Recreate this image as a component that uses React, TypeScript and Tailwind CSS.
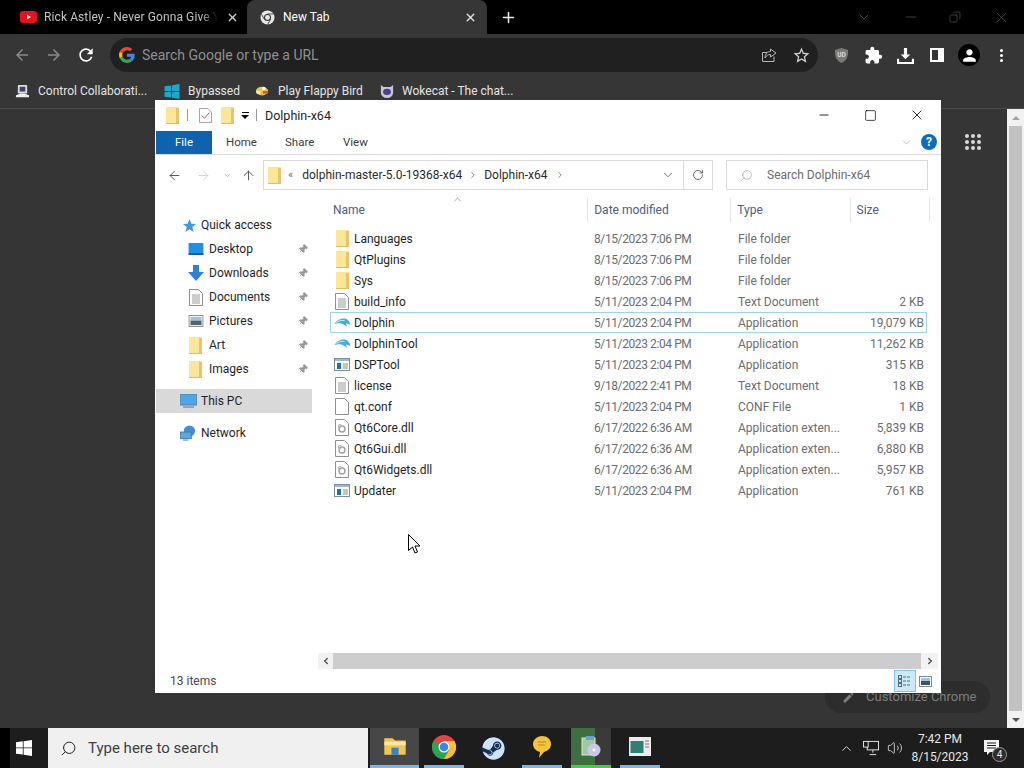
import { MdArrowBack, MdArrowForward, MdRefresh, MdExtension, MdPerson, MdEdit, MdOutlineStarBorder } from "react-icons/md";
import { FaSteam } from "react-icons/fa";
import { X, Plus, ChevronDown, Minus, Square, Copy, Search, ArrowLeft, ArrowRight, ArrowUp, RotateCw, Pin, ChevronRight, ChevronLeft, ChevronUp, Volume2 } from "lucide-react";

const FONT = "font-['Roboto',sans-serif]";

function Folder({ className = "" }: { className?: string }) {
  return (
    <svg viewBox="0 0 13 17" className={`w-[13px] h-[17px] ${className}`}>
      <rect x="0" y="0" width="13" height="17" fill="#fde59a" />
      <rect x="10" y="1" width="3" height="16" fill="#e8c568" />
      <rect x="0" y="16" width="13" height="1" fill="#e3bd5a" />
    </svg>
  );
}

function TextFile() {
  return (
    <svg viewBox="0 0 14 17" className="w-[14px] h-[17px]">
      <path d="M.5.5h9l4 4v12H.5z" fill="#fff" stroke="#8f8f8f" />
      <path d="M3 6h8M3 8h8M3 10h8M3 12h8M3 14h8" stroke="#9a9a9a" />
    </svg>
  );
}

function PlainFile() {
  return (
    <svg viewBox="0 0 14 17" className="w-[14px] h-[17px]">
      <path d="M.5.5h9l4 4v12H.5z" fill="#fff" stroke="#8f8f8f" />
    </svg>
  );
}

function DllFile() {
  return (
    <svg viewBox="0 0 14 17" className="w-[14px] h-[17px]">
      <path d="M.5.5h9l4 4v12H.5z" fill="#fff" stroke="#8f8f8f" />
      <circle cx="7" cy="10" r="3" fill="none" stroke="#a0a0a0" strokeWidth="1.4" />
      <circle cx="5" cy="7" r="1.6" fill="none" stroke="#b5b5b5" />
    </svg>
  );
}

function AppFile() {
  return (
    <svg viewBox="0 0 16 13" className="w-[16px] h-[13px]">
      <rect x=".5" y=".5" width="15" height="12" fill="#fff" stroke="#7b8fa3" />
      <rect x="1" y="1" width="14" height="2" fill="#9db8d2" />
      <rect x="3" y="5" width="4" height="6" fill="#1c6fc0" />
      <path d="M9 6h5M9 8h5M9 10h5" stroke="#8a8a8a" />
    </svg>
  );
}

function DolphinIcon() {
  return (
    <svg viewBox="0 0 17 12" className="w-[17px] h-[12px]">
      <path d="M.5 7C3 2.500 8 1 11 1.500c3 .5 4.500 3 5.500 6.500-1.500-1-3-1.500-4.500-1.500l1 3C11 8.500 9 7 7 6.500 5 6 3 6 .5 7z" fill="#45aedb" />
      <path d="M2.500 5.500c2-1.500 5-2.500 8-2" stroke="#d8f0fa" fill="none" />
    </svg>
  );
}

type Row = { name: string; date: string; type: string; size: string; icon: React.ReactNode; selected?: boolean };

const rows: Row[] = [
  { name: "Languages", date: "8/15/2023 7:06 PM", type: "File folder", size: "", icon: <Folder /> },
  { name: "QtPlugins", date: "8/15/2023 7:06 PM", type: "File folder", size: "", icon: <Folder /> },
  { name: "Sys", date: "8/15/2023 7:06 PM", type: "File folder", size: "", icon: <Folder /> },
  { name: "build_info", date: "5/11/2023 2:04 PM", type: "Text Document", size: "2 KB", icon: <TextFile /> },
  { name: "Dolphin", date: "5/11/2023 2:04 PM", type: "Application", size: "19,079 KB", icon: <DolphinIcon />, selected: true },
  { name: "DolphinTool", date: "5/11/2023 2:04 PM", type: "Application", size: "11,262 KB", icon: <DolphinIcon /> },
  { name: "DSPTool", date: "5/11/2023 2:04 PM", type: "Application", size: "315 KB", icon: <AppFile /> },
  { name: "license", date: "9/18/2022 2:41 PM", type: "Text Document", size: "18 KB", icon: <TextFile /> },
  { name: "qt.conf", date: "5/11/2023 2:04 PM", type: "CONF File", size: "1 KB", icon: <PlainFile /> },
  { name: "Qt6Core.dll", date: "6/17/2022 6:36 AM", type: "Application exten...", size: "5,839 KB", icon: <DllFile /> },
  { name: "Qt6Gui.dll", date: "6/17/2022 6:36 AM", type: "Application exten...", size: "6,880 KB", icon: <DllFile /> },
  { name: "Qt6Widgets.dll", date: "6/17/2022 6:36 AM", type: "Application exten...", size: "5,957 KB", icon: <DllFile /> },
  { name: "Updater", date: "5/11/2023 2:04 PM", type: "Application", size: "761 KB", icon: <AppFile /> },
];

function ChromeBar() {
  return (
    <div className="shrink-0">
      {/* Tab strip */}
      <div className="h-[34px] bg-black flex items-stretch text-[12px]">
        <div className="w-[247px] flex items-center pl-[20px] text-[#c4c4c4]">
          <svg viewBox="0 0 17 12" className="w-[17px] h-[12px] shrink-0">
            <rect width="17" height="12" rx="3" fill="#e8121c" />
            <path d="M7 3.500l4 2.500-4 2.500z" fill="#fff" />
          </svg>
          <span className="ml-[7px] w-[174px] whitespace-nowrap tracking-[0.1px] [mask-image:linear-gradient(to_right,black_90%,transparent)]">Rick Astley - Never Gonna Give Y</span>
          <X size={13} strokeWidth={2.5} className="ml-[8px] text-[#c8c8c8]" />
        </div>
        <div className="w-[240px] h-[34px] bg-[#363636] rounded-t-lg flex items-center pl-[13px] text-white">
          <svg viewBox="0 0 16 16" className="w-[15px] h-[15px] shrink-0">
            <circle cx="8" cy="8" r="7.500" fill="#e8e8e8" />
            <circle cx="8" cy="8" r="3.800" fill="#363636" />
            <circle cx="8" cy="8" r="2.600" fill="#e8e8e8" />
            <path d="M8 4.200h6.500M4.700 10 1.500 4.500M11.300 10 8 15.500" stroke="#363636" strokeWidth=".9" />
          </svg>
          <span className="ml-[8px] flex-1">New Tab</span>
          <X size={13} strokeWidth={2.5} className="mr-[10px] text-[#e0e0e0]" />
        </div>
        <Plus size={17} strokeWidth={2.2} className="ml-[13px] self-center text-[#e8e8e8]" />
        <div className="flex-1" />
        <div className="flex items-center text-[#5b5b5b]">
          <ChevronDown size={16} strokeWidth={1.2} className="mr-[31px]" />
          <Minus size={16} strokeWidth={1} className="mr-[30px]" />
          <Copy size={12} strokeWidth={1.2} className="mr-[32px] -scale-x-100" />
          <X size={17} strokeWidth={1} className="mr-[14px]" />
        </div>
      </div>

      {/* Toolbar */}
      <div className="h-[40px] pt-[2px] bg-[#363636] flex items-center">
        <MdArrowBack size={18} className="ml-[13px] text-[#8a8a8a]" />
        <MdArrowForward size={18} className="ml-[14px] text-[#8a8a8a]" />
        <MdRefresh size={20} className="ml-[13px] text-white" />
        <div className="ml-[14px] w-[708px] h-[34px] rounded-full bg-[#202020] flex items-center pl-[9px]">
          <svg viewBox="0 0 48 48" className="w-[16px] h-[16px]">
            <path fill="#EA4335" d="M24 9.500c3.500 0 6.700 1.200 9.200 3.600l6.900-6.900C35.900 2.400 30.500 0 24 0 14.600 0 6.500 5.400 2.600 13.200l8 6.200C12.500 13.700 17.800 9.500 24 9.500z" />
            <path fill="#4285F4" d="M47 24.500c0-1.600-.1-3.100-.4-4.500H24v9h12.900c-.6 3-2.200 5.500-4.800 7.200l7.700 6C44.300 38 47 31.800 47 24.500z" />
            <path fill="#FBBC05" d="M10.600 28.600c-.5-1.400-.8-3-.8-4.600s.3-3.200.8-4.600l-8-6.200C.9 16.500 0 20.100 0 24s.9 7.500 2.600 10.800z" />
            <path fill="#34A853" d="M24 48c6.500 0 11.900-2.100 15.800-5.800l-7.700-6c-2.100 1.400-4.900 2.300-8.100 2.300-6.200 0-11.500-4.200-13.400-9.900l-8 6.200C6.500 42.600 14.600 48 24 48z" />
          </svg>
          <span className="ml-[7px] text-[14px] text-[#8f8f8f]">Search Google or type a URL</span>
          <div className="flex-1" />
          <svg viewBox="0 0 16 16" className="w-[16px] h-[16px] text-[#b5b5b5] mr-[15px]" fill="none" stroke="currentColor">
            <path d="M13 9.500v5H1.500V5.500H6M9.500 2v2.500C6 4.500 4 7 4 11c1.500-2.500 3-3.500 5.500-3.500V10L15 6z" />
          </svg>
          <MdOutlineStarBorder size={19} className="text-[#d0d0d0] mr-[7px]" />
        </div>
        <svg viewBox="0 0 16 18" className="ml-[16px] w-[15px] h-[17px]">
          <path d="M8 1l7 2c0 7-1 11-7 14C2 14 1 10 1 3z" fill="#7b7b7b" />
          <text x="8" y="11" textAnchor="middle" fontSize="7" fill="#dcdcdc" fontWeight="700">UD</text>
        </svg>
        <MdExtension size={19} className="ml-[15px] text-white" />
        <svg viewBox="0 0 16 16" className="ml-[14px] w-[17px] h-[17px]" fill="#fff">
          <path d="M6.500 1h3v6h3L8 11.500 3.500 7h3zM0 11h2v3h12v-3h2v5H0z" />
        </svg>
        <div className="ml-[16px] w-[14px] h-[14px] border-[2px] border-white border-r-[6px] bg-[#363636]" />
        <div className="ml-[14px] w-[22px] h-[22px] rounded-full bg-black flex items-center justify-center">
          <MdPerson size={19} className="text-white" />
        </div>
        <div className="ml-[20px] flex flex-col gap-[2px]">
          <div className="w-[3px] h-[3px] rounded-full bg-white" />
          <div className="w-[3px] h-[3px] rounded-full bg-white" />
          <div className="w-[3px] h-[3px] rounded-full bg-white" />
        </div>
      </div>

      {/* Bookmarks */}
      <div className="h-[35px] bg-[#363636] border-b border-[#4a4a4a] flex items-center text-[12px] text-[#e4e4e4]">
        <svg viewBox="0 0 16 16" className="ml-[15px] w-[15px] h-[15px]">
          <rect x="3" y="1" width="10" height="9" rx="1" fill="#d8d8e8" />
          <rect x="5" y="3" width="6" height="5" fill="#40406a" />
          <path d="M1 12l5-2h4l5 2v2H1z" fill="#eee" />
        </svg>
        <span className="ml-[8px] w-[110px] whitespace-nowrap">Control Collaborati...</span>
        <svg viewBox="0 0 16 16" className="ml-[16px] w-[16px] h-[15px]" fill="#19a9c9">
          <path d="M0 2.500 7 1.500v6H0zM8 1.400l8-1.400v7.500H8zM0 8.500h7v6l-7-1zM8 8.500h8V16l-8-1.400z" />
        </svg>
        <span className="ml-[8px] w-[50px] whitespace-nowrap">Bypassed</span>
        <svg viewBox="0 0 16 12" className="ml-[17px] w-[14px] h-[12px]">
          <ellipse cx="8" cy="6" rx="7" ry="5" fill="#e8c25a" />
          <rect x="9" y="6" width="6" height="3" fill="#d8542c" />
          <circle cx="10" cy="3" r="2" fill="#fff" />
          <path d="M1 6h5v3H2z" fill="#f4e9c8" />
        </svg>
        <span className="ml-[9px] w-[84px] whitespace-nowrap">Play Flappy Bird</span>
        <svg viewBox="0 0 16 16" className="ml-[18px] w-[14px] h-[14px]">
          <path d="M1 1l3 2.500h8L15 1v9a7 6 0 0 1-14 0z" fill="#c7c3de" />
          <ellipse cx="8" cy="9" rx="4.500" ry="3.500" fill="#4b3f8a" />
        </svg>
        <span className="ml-[8px] whitespace-nowrap">Wokecat - The chat...</span>
      </div>
    </div>
  );
}

function QuickItem({ icon, label }: { icon: React.ReactNode; label: string }) {
  return (
    <div className="h-[24px] flex items-center">
      <div className="w-[54px] flex justify-end pr-[5px]">
        <div className="w-[17px] flex justify-center">{icon}</div>
      </div>
      <span className="w-[89px]">{label}</span>
      <Pin size={10} className="text-[#9a9a9a] fill-[#9a9a9a] rotate-45" />
    </div>
  );
}

function NavPane() {
  return (
    <div className="w-[157px] shrink-0 pt-[18px] text-[12px] text-[#1f1f1f]">
      <div className="h-[24px] flex items-center pl-[27px]">
        <svg viewBox="0 0 16 16" className="w-[15px] h-[15px]">
          <path d="M8 1l2 5 5 .4-4 3.300 1.300 5.300L8 12l-4.300 3L5 9.700 1 6.400 6 6z" fill="#3d9ae0" />
        </svg>
        <span className="ml-[4px]">Quick access</span>
      </div>
      <QuickItem
        label="Desktop"
        icon={
          <svg viewBox="0 0 16 13" className="w-[16px] h-[12px]">
            <rect width="16" height="13" fill="#1e90e8" />
            <rect y="11" width="16" height="2" fill="#0e5fa8" />
          </svg>
        }
      />
      <QuickItem
        label="Downloads"
        icon={
          <svg viewBox="0 0 16 16" className="w-[16px] h-[16px]">
            <path d="M5 0h6v7h5l-8 9-8-9h5z" fill="#2f80d8" />
          </svg>
        }
      />
      <QuickItem label="Documents" icon={<TextFile />} />
      <QuickItem
        label="Pictures"
        icon={
          <svg viewBox="0 0 16 13" className="w-[16px] h-[12px]">
            <rect x=".5" y=".5" width="15" height="12" fill="#fff" stroke="#8a8a8a" />
            <rect x="2" y="2" width="12" height="4" fill="#9fc4e2" />
            <rect x="2" y="6" width="12" height="5" fill="#4f6470" />
          </svg>
        }
      />
      <QuickItem label="Art" icon={<Folder />} />
      <QuickItem label="Images" icon={<Folder />} />
      <div className="mt-[8px] h-[24px] bg-[#d9d9d9] flex items-center pl-[24px] ml-px">
        <svg viewBox="0 0 17 15" className="w-[17px] h-[15px]">
          <rect x="0" y="0" width="17" height="11" fill="#4aa8e8" stroke="#5a7f98" />
          <rect x="3" y="12" width="11" height="2" fill="#8fa6b8" />
        </svg>
        <span className="ml-[4px]">This PC</span>
      </div>
      <div className="mt-[8px] h-[24px] flex items-center pl-[25px]">
        <svg viewBox="0 0 17 16" className="w-[16px] h-[16px]">
          <circle cx="10" cy="6" r="6" fill="#3f8fd8" />
          <rect x="0" y="7" width="12" height="7" fill="#5ba8e0" stroke="#4a7a9a" />
          <rect x="3" y="15" width="6" height="1" fill="#4a7a9a" />
        </svg>
        <span className="ml-[5px]">Network</span>
      </div>
    </div>
  );
}

function FileList() {
  return (
    <div className="flex-1 min-w-0 text-[12px]">
      {/* Column headers */}
      <div className="h-[31px] relative flex items-center pl-[7px] pb-[2px] text-[#4c607a]">
        <ChevronUp size={11} strokeWidth={1.5} className="absolute left-[123px] -top-px text-[#7a7a7a]" />
        <span className="w-[262px] border-r border-[#e5e5e5] h-[24px] leading-[24px] pl-[5px] -ml-[8px]">Name</span>
        <span className="w-[144px] border-r border-[#e5e5e5] h-[24px] leading-[24px] pl-[6px]">Date modified</span>
        <span className="w-[120px] border-r border-[#e5e5e5] h-[24px] leading-[24px] pl-[6px]">Type</span>
        <span className="w-[80px] border-r border-[#e5e5e5] h-[24px] leading-[24px] pl-[6px]">Size</span>
      </div>
      {/* Rows */}
      <div className="pt-[2px] pl-[1px] w-[611px]">
        {rows.map((r) => (
          <div
            key={r.name}
            className={`h-[21px] w-[597px] flex items-center ${r.selected ? "shadow-[inset_0_0_0_1px_#9fd3e8]" : ""}`}
          >
            <div className="w-[24px] flex items-center justify-center">{r.icon}</div>
            <span className="w-[240px] text-[#1f1f1f] whitespace-nowrap">{r.name}</span>
            <span className="w-[144px] text-[#6d6d6d] whitespace-nowrap tracking-[-0.4px]">{r.date}</span>
            <span className="w-[110px] text-[#6d6d6d] whitespace-nowrap">{r.type}</span>
            <span className="w-[76px] text-right text-[#6d6d6d] whitespace-nowrap">{r.size}</span>
          </div>
        ))}
      </div>
    </div>
  );
}

function ExplorerWindow() {
  return (
    <div className={`absolute left-[155px] top-[100px] w-[786px] h-[593px] bg-white flex flex-col ${FONT}`}>
      {/* Title bar */}
      <div className="h-[30px] shrink-0 flex items-center pl-[11px] text-[12.5px] text-[#1f1f1f]">
        <Folder />
        <div className="ml-[8px] w-px h-[12px] bg-[#9a9a9a]" />
        <svg viewBox="0 0 14 16" className="ml-[11px] w-[13px] h-[15px]">
          <path d="M.5.5h9l4 4v11H.5z" fill="#fff" stroke="#9a9a9a" />
          <path d="M3 8l3 3 5-6" stroke="#d0453a" fill="none" />
        </svg>
        <Folder className="ml-[9px]" />
        <div className="ml-[7px] flex flex-col items-center gap-[2px]">
          <div className="w-[7px] h-px bg-black" />
          <div className="w-0 h-0 border-x-[4px] border-x-transparent border-t-[4px] border-t-black" />
        </div>
        <div className="ml-[7px] w-px h-[12px] bg-[#9a9a9a]" />
        <span className="ml-[8px] pt-[2px]">Dolphin-x64</span>
        <div className="flex-1" />
        <Minus size={14} strokeWidth={1.4} className="mr-[33px] text-black" />
        <Square size={13} strokeWidth={1.3} className="mr-[32px] text-black" />
        <X size={16} strokeWidth={1.2} className="mr-[16px] text-black" />
      </div>

      {/* Ribbon tabs */}
      <div className="h-[25px] shrink-0 flex items-end border-b border-[#dadbdc] text-[11.5px] text-[#3c3c3c] pl-px">
        <div className="w-[56px] h-[23px] bg-[#0f62ae] text-white flex items-center justify-center">File</div>
        <div className="ml-[14px] w-[59px] h-[23px] flex items-center">Home</div>
        <div className="w-[58px] h-[23px] flex items-center">Share</div>
        <div className="h-[23px] flex items-center">View</div>
        <div className="flex-1" />
        <ChevronDown size={13} strokeWidth={1.3} className="self-center mr-[8px] text-[#a8a8a8]" />
        <div className="self-center mr-[4px] w-[16px] h-[16px] rounded-full bg-[#0f6cbd] text-white text-[12px] font-bold flex items-center justify-center">?</div>
      </div>

      {/* Address row */}
      <div className="h-[40px] shrink-0 flex items-center text-[12px]">
        <ArrowLeft size={15} strokeWidth={1.6} className="ml-[12px] text-[#5a5a5a]" />
        <ArrowRight size={15} strokeWidth={1.6} className="ml-[14px] text-[#d5d5d5]" />
        <ChevronDown size={9} strokeWidth={1.6} className="ml-[12px] text-[#9a9a9a]" />
        <ArrowUp size={15} strokeWidth={1.6} className="ml-[9px] text-[#5a5a5a]" />
        <div className="ml-[7px] w-[450px] h-[30px] border border-[#d9d9d9] flex items-center text-[#2b2b2b]">
          <Folder className="ml-[4px]" />
          <span className="ml-[7px] text-[#6d6d6d] text-[11px]">«</span>
          <span className="ml-[9px] w-[160px] whitespace-nowrap">dolphin-master-5.0-19368-x64</span>
          <ChevronRight size={10} className="ml-[6px] text-[#6d6d6d]" />
          <span className="ml-[6px] w-[66px] whitespace-nowrap">Dolphin-x64</span>
          <ChevronRight size={10} className="ml-[5px] text-[#6d6d6d]" />
          <div className="flex-1" />
          <ChevronDown size={14} strokeWidth={1.4} className="mr-[8px] text-[#5a5a5a]" />
          <div className="w-px h-[28px] bg-[#d9d9d9]" />
          <RotateCw size={12} className="mx-[8px] text-[#6d6d6d]" />
        </div>
        <div className="ml-[13px] w-[202px] h-[30px] border border-[#d9d9d9] flex items-center text-[#6d6d6d]">
          <Search size={13} strokeWidth={1.2} className="ml-[13px] text-[#9a9a9a] -scale-x-100" />
          <span className="ml-[14px]">Search Dolphin-x64</span>
        </div>
      </div>

      {/* Body */}
      <div className="flex-1 min-h-0 flex">
        <NavPane />
        <div className="flex-1 min-w-0 pl-[18px] pr-[10px] flex flex-col -ml-[1px] mr-[1px]">
          <FileList />
        </div>
      </div>

      {/* Horizontal scrollbar */}
      <div className="h-[16px] shrink-0 ml-[163px] mr-[3px] flex items-stretch bg-[#f2f2f2]">
        <div className="w-[15px] flex items-center justify-center">
          <ChevronLeft size={10} strokeWidth={3.5} className="text-[#555]" />
        </div>
        <div className="flex-1 bg-[#cdcdcd]" />
        <div className="w-[17px] flex items-center justify-center">
          <ChevronRight size={10} strokeWidth={3.5} className="text-[#555]" />
        </div>
      </div>

      {/* Status bar */}
      <div className="h-[24px] shrink-0 flex items-center pl-[15px] text-[12px] text-[#4a4a4a]">
        <span>13 items</span>
        <div className="flex-1" />
        <div className="w-[22px] h-[22px] bg-[#cbe8f6] border border-[#7fc4e0] flex items-center justify-center">
          <svg viewBox="0 0 14 12" className="w-[14px] h-[12px]" stroke="#5a6a78" fill="none">
            <rect x=".5" y=".5" width="3" height="3" />
            <rect x=".5" y="4.500" width="3" height="3" />
            <rect x=".5" y="8.500" width="3" height="3" />
            <path d="M5 2h8M5 6h8M5 10h8" strokeDasharray="3 1" />
          </svg>
        </div>
        <svg viewBox="0 0 13 11" className="ml-[3px] mr-[9px] w-[13px] h-[11px]">
          <rect x=".5" y=".5" width="12" height="10" fill="#fff" stroke="#7a8a98" />
          <rect x="2" y="2" width="9" height="3" fill="#9fc4e2" />
          <rect x="2" y="5" width="9" height="4" fill="#42525e" />
        </svg>
      </div>
    </div>
  );
}

function Page() {
  return (
    <div className="flex-1 min-h-0 flex relative">
      <div className="flex-1 bg-[#353535] relative">
        {/* Apps launcher */}
        <div className="absolute left-[965px] top-[25px] grid grid-cols-3 gap-[2px]">
          {Array.from({ length: 9 }).map((_, i) => (
            <div key={i} className="w-[4px] h-[4px] rounded-full bg-[#d8d8d8]" />
          ))}
        </div>
        {/* Customize Chrome */}
        <div className="absolute left-[825px] top-[572px] w-[165px] h-[32px] rounded-full bg-[#2d2d2d] flex items-center pl-[17px] text-[13px] text-[#7d7d7d]">
          <MdEdit size={13} />
          <span className="ml-[11px] whitespace-nowrap">Customize Chrome</span>
        </div>
      </div>
      {/* Page scrollbar */}
      <div className="w-[17px] bg-[#f1f1f1] flex flex-col items-center">
        <div className="h-[17px] flex items-center justify-center">
          <div className="w-0 h-0 border-x-[4px] border-x-transparent border-b-[4px] border-b-[#a3a3a3]" />
        </div>
        <div className="flex-1 w-[13px] bg-[#c1c1c1]" />
        <div className="h-[17px] flex items-center justify-center">
          <div className="w-0 h-0 border-x-[4px] border-x-transparent border-t-[4px] border-t-[#505050]" />
        </div>
      </div>
    </div>
  );
}

function Taskbar() {
  return (
    <div className="h-[40px] shrink-0 bg-[#1d1d1d] flex items-stretch">
      <div className="w-[10px] bg-black" />
      <div className="w-[38px] flex items-center pl-[6px]">
        <svg viewBox="0 0 16 16" className="w-[16px] h-[16px]" fill="#fff">
          <path d="M0 2.300 6.800 1.300v6.200H0zM7.600 1.200 16 0v7.500H7.600zM0 8.300h6.800v6.300L0 13.700zM7.600 8.300H16V16l-8.400-1.200z" />
        </svg>
      </div>
      <div className="w-[320px] bg-[#f0f0f0] flex items-center pl-[12px] text-[#3f3f3f] text-[15px]">
        <Search size={17} strokeWidth={1.4} className="text-[#222] -scale-x-100" />
        <span className="ml-[11px]">Type here to search</span>
      </div>
      <div className="w-[2px]" />
      {/* File Explorer */}
      <div className="w-[49px] bg-[#474747] border-b-[3px] border-[#76b9ed] flex items-center justify-center">
        <svg viewBox="0 0 18 16" className="w-[22px] h-[19px]">
          <path d="M0 1h7l2 2h9v12H0z" fill="#f5c34f" />
          <rect x="0" y="4" width="18" height="3" fill="#fce6a2" />
          <rect x="6" y="9" width="6" height="6" fill="#2e86c8" />
        </svg>
      </div>
      {/* Chrome */}
      <div className="w-[40px] mx-[5px] flex items-center justify-center border-b-[3px] border-[#76b9ed]">
        <svg viewBox="0 0 24 24" className="w-[24px] h-[24px]">
          <circle cx="12" cy="12" r="12" fill="#e8453c" />
          <path d="M12 12 1.600 6A12 12 0 0 0 12 24l5-9z" fill="#2ea44f" />
          <path d="M12 6h10.400A12 12 0 0 1 12 24l5.200-9z" fill="#fbc02d" />
          <circle cx="12" cy="12" r="5.500" fill="#fff" />
          <circle cx="12" cy="12" r="4.300" fill="#3c82f0" />
        </svg>
      </div>
      {/* Steam */}
      <div className="w-[49px] flex items-center justify-center">
        <FaSteam size={23} className="text-[#cfe3f5] bg-[#10305c] rounded-full" />
      </div>
      {/* Chat */}
      <div className="w-[40px] mx-[4px] flex items-center justify-center border-b-[3px] border-[#76b9ed]">
        <svg viewBox="0 0 20 24" className="w-[20px] h-[24px]">
          <path d="M10 1c5 0 9 3 9 8s-4 7-7 8l-5 6 1-6C4 16 1 13 1 9s4-8 9-8z" fill="#f3c53a" />
          <path d="M6 7h8M6 10h7" stroke="#b98a1a" />
        </svg>
      </div>
      {/* Installer */}
      <div className="w-[40px] ml-[5px] border-b-[3px] border-[#3fd13f] flex items-center justify-center bg-gradient-to-r from-[#3f6f3f] from-60% to-[#3a3a3a] to-60%">
        <svg viewBox="0 0 20 24" className="w-[20px] h-[24px]">
          <rect x="1" y="3" width="13" height="17" fill="#9ec8a0" stroke="#dfe8df" />
          <circle cx="13" cy="15" r="6.500" fill="#c8c8e8" />
          <circle cx="13" cy="15" r="1.500" fill="#fff" />
          <rect x="5" y="1" width="8" height="4" fill="#6aa0d8" />
        </svg>
      </div>
      {/* Preview */}
      <div className="w-[40px] ml-[9px] flex items-center justify-center border-b-[3px] border-[#76b9ed]">
        <svg viewBox="0 0 22 19" className="w-[22px] h-[19px]">
          <rect width="22" height="19" fill="#ececec" />
          <rect x="1.500" y="4" width="13" height="12" fill="#2f7f72" />
          <path d="M16 4h4M16 7h4M16 10h4" stroke="#777" />
        </svg>
      </div>
      <div className="flex-1" />
      {/* Tray */}
      <div className="flex items-center text-[#e8e8e8]">
        <ChevronUp size={15} strokeWidth={1.4} className="mr-[9px]" />
        <svg viewBox="0 0 17 17" className="w-[16px] h-[16px] mr-[8px]" fill="none" stroke="#e8e8e8">
          <rect x="4.500" y="1.500" width="12" height="9" />
          <rect x=".5" y="1.500" width="5" height="6" fill="#1d1d1d" />
          <path d="M10.500 10.500v3M7 15.500h7" />
        </svg>
        <Volume2 size={16} strokeWidth={1.2} className="mr-[8px]" />
        <div className="w-[58px] flex flex-col items-center text-[12px] leading-[18px]">
          <span>7:42 PM</span>
          <span>8/15/2023</span>
        </div>
        <div className="relative w-[55px] pl-[15px]">
          <svg viewBox="0 0 16 16" className="w-[16px] h-[16px]" fill="#f2f2f2">
            <path d="M0 0h15v12H6l-3 3v-3H0z" />
            <path d="M3 3h9M3 5.500h9M3 8h9" stroke="#1d1d1d" />
          </svg>
          <div className="absolute left-[23px] top-[7px] w-[15px] h-[15px] rounded-full bg-[#2c2c2c] border border-[#9a9a9a] text-[10px] leading-[13px] text-center">4</div>
        </div>
      </div>
    </div>
  );
}

export default function App() {
  return (
    <div className={`relative w-[1024px] h-[768px] overflow-hidden flex flex-col bg-[#353535] ${FONT}`}>
      <ChromeBar />
      <Page />
      <Taskbar />
      <ExplorerWindow />
      {/* Mouse cursor */}
      <svg viewBox="0 0 13 20" className="absolute left-[408px] top-[534px] w-[13px] h-[20px]">
        <path d="M.5.500v16l4-3.500 2.500 6 2.500-1-2.500-6h5z" fill="#fff" stroke="#000" />
      </svg>
    </div>
  );
}
